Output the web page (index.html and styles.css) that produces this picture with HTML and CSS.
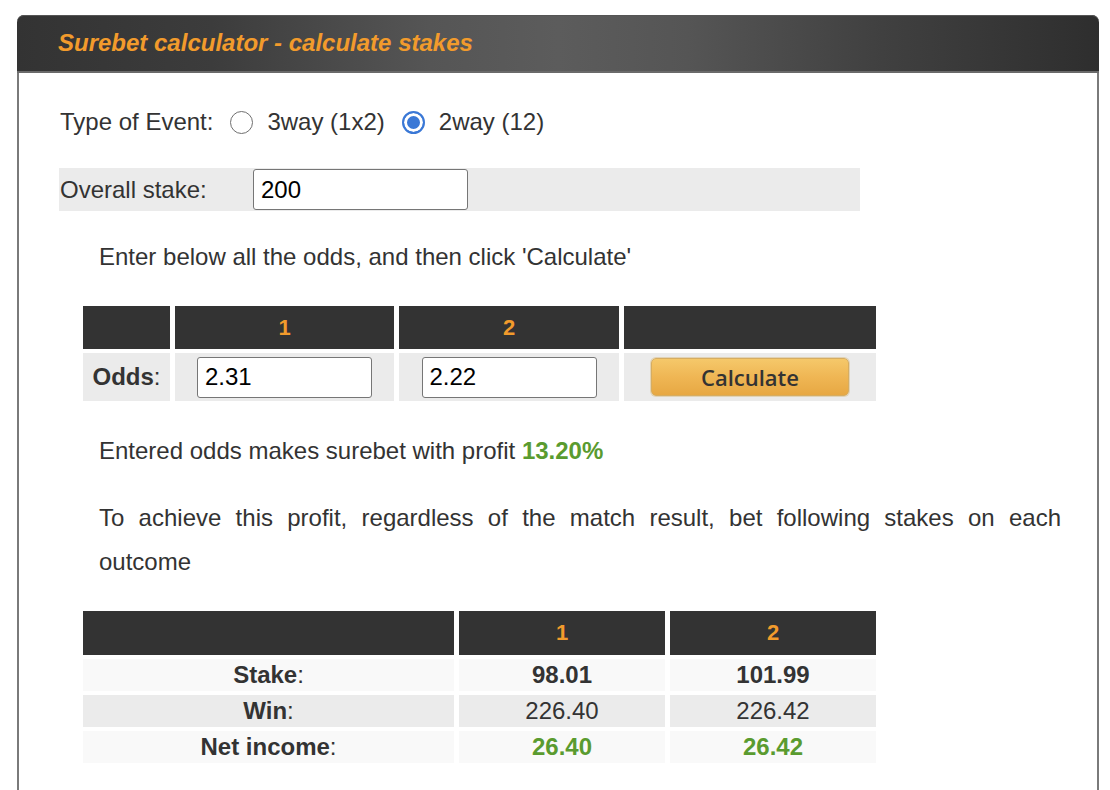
FILE: index.html
```html
<!DOCTYPE html>
<html lang="en">
<head>
<meta charset="utf-8">
<title>Surebet calculator</title>
<link rel="stylesheet" href="styles.css">
</head>
<body>
<div class="panel">
  <div class="panel-head"><h1 class="title">Surebet calculator - calculate stakes</h1></div>
  <div class="panel-body">
    <div class="event-row">
      <span class="event-label">Type of Event:</span>
      <label class="opt"><input type="radio" name="type" class="radio"><span>3way (1x2)</span></label>
      <label class="opt"><input type="radio" name="type" class="radio" checked><span>2way (12)</span></label>
    </div>
    <div class="stake-row">
      <span class="stake-label">Overall stake:</span>
      <input class="field stake-input" type="text" value="200">
    </div>
    <p class="note">Enter below all the odds, and then click 'Calculate'</p>
    <div class="odds-grid">
      <div class="hcell"></div>
      <div class="hcell">1</div>
      <div class="hcell">2</div>
      <div class="hcell"></div>
      <div class="ocell"><span><b>Odds</b>:</span></div>
      <div class="ocell"><input class="field odds-input" type="text" value="2.31"></div>
      <div class="ocell"><input class="field odds-input" type="text" value="2.22"></div>
      <div class="ocell"><button class="calc" type="button">Calculate</button></div>
    </div>
    <p class="note result">Entered odds makes surebet with profit <b class="green">13.20%</b></p>
    <p class="note explain">To achieve this profit, regardless of the match result, bet following stakes on each outcome</p>
    <div class="res-grid">
      <div class="hcell rh"></div>
      <div class="hcell rh">1</div>
      <div class="hcell rh">2</div>
      <div class="rcell light"><span><b>Stake</b>:</span></div>
      <div class="rcell light"><b>98.01</b></div>
      <div class="rcell light"><b>101.99</b></div>
      <div class="rcell gray"><span><b>Win</b>:</span></div>
      <div class="rcell gray">226.40</div>
      <div class="rcell gray">226.42</div>
      <div class="rcell light"><span><b>Net income</b>:</span></div>
      <div class="rcell light"><b class="green">26.40</b></div>
      <div class="rcell light"><b class="green">26.42</b></div>
    </div>
  </div>
</div>
</body>
</html>
```

FILE: styles.css
```css
html, body {
  margin: 0;
  padding: 0;
  background: #ffffff;
}

body {
  font-family: "Liberation Sans", Arial, sans-serif;
  font-size: 24px;
  color: #333333;
}

.panel {
  margin: 15px 0 0 17px;
  width: 1082px;
}

.panel-head {
  height: 56px;
  border-radius: 7px 7px 0 0;
  border-bottom: 2px solid #6a6a6a;
  background: linear-gradient(to right, #333333 0%, #3c3c3c 18%, #555555 38%, #5c5c5c 50%, #555555 62%, #404040 80%, #2e2e2e 100%);
  box-shadow: inset 0 1px 0 #555555;
}

.title {
  margin: 0;
  padding-left: 41px;
  line-height: 56px;
  font-size: 24px;
  font-weight: bold;
  font-style: italic;
  color: #f29b2c;
}

.panel-body {
  border-left: 2px solid #7a7a7a;
  border-right: 2px solid #7a7a7a;
  padding: 27px 36px 60px 40px;
}

.event-row {
  display: flex;
  align-items: center;
  height: 44px;
  padding-left: 1px;
}

.opt {
  display: flex;
  align-items: center;
}

.radio {
  appearance: none;
  -webkit-appearance: none;
  width: 23px;
  height: 23px;
  margin: 0 14px 0 17px;
  border: 1.5px solid #6f6f6f;
  border-radius: 50%;
  background: #ffffff;
  box-sizing: border-box;
}

.radio:checked {
  border: 2px solid #3a78d6;
  background: #3a78d6;
  box-shadow: inset 0 0 0 3px #ffffff;
}

.stake-row {
  display: flex;
  align-items: center;
  width: 801px;
  height: 43px;
  margin-top: 24px;
  background: #ebebeb;
}

.stake-label {
  width: 193px;
  padding-left: 1px;
}

.field {
  box-sizing: border-box;
  height: 41px;
  border: 1px solid #767676;
  border-radius: 3px;
  padding: 0 0 0 7px;
  font-family: "Liberation Sans", Arial, sans-serif;
  font-size: 24px;
  color: #000000;
  background: #ffffff;
}

.stake-input {
  width: 215px;
}

.note {
  margin: 31px 0 0 0;
  padding-left: 40px;
  line-height: 30px;
}

.odds-grid {
  display: grid;
  grid-template-columns: 87px 219px 220px 252px;
  grid-template-rows: 43px 48px;
  column-gap: 5px;
  row-gap: 4px;
  margin: 34px 0 0 24px;
}

.hcell {
  background: #333333;
  color: #f29b2c;
  font-weight: bold;
  font-size: 22px;
  display: flex;
  align-items: center;
  justify-content: center;
}

.ocell {
  background: #ebebeb;
  display: flex;
  align-items: center;
  justify-content: center;
}

.odds-input {
  width: 175px;
}

.calc {
  width: 198px;
  height: 38px;
  border: 1px solid #d6ad62;
  border-radius: 5px;
  background: linear-gradient(to bottom, #f5c86a 0%, #efb654 50%, #e7a843 100%);
  font-family: "Open Sans", "Noto Sans", sans-serif;
  font-weight: 600;
  font-size: 22px;
  color: #333333;
  padding: 0;
  box-shadow: 0 0 0 1px #e2d3b5;
}

.result {
  margin-top: 35px;
}

.green {
  color: #5a9b2f;
}

.explain {
  margin-top: 30px;
  line-height: 44px;
  text-align: justify;
  word-spacing: 2px;
}

.res-grid {
  display: grid;
  grid-template-columns: 371px 206px 206px;
  grid-template-rows: 44px 32px 32px 32px;
  column-gap: 5px;
  row-gap: 4px;
  margin: 27px 0 0 24px;
  width: 793px;
}

.rh {
  font-size: 22px;
}

.rcell {
  display: flex;
  align-items: center;
  justify-content: center;
  font-size: 24px;
}

.light {
  background: #f9f9f9;
}

.gray {
  background: #ebebeb;
}
```
